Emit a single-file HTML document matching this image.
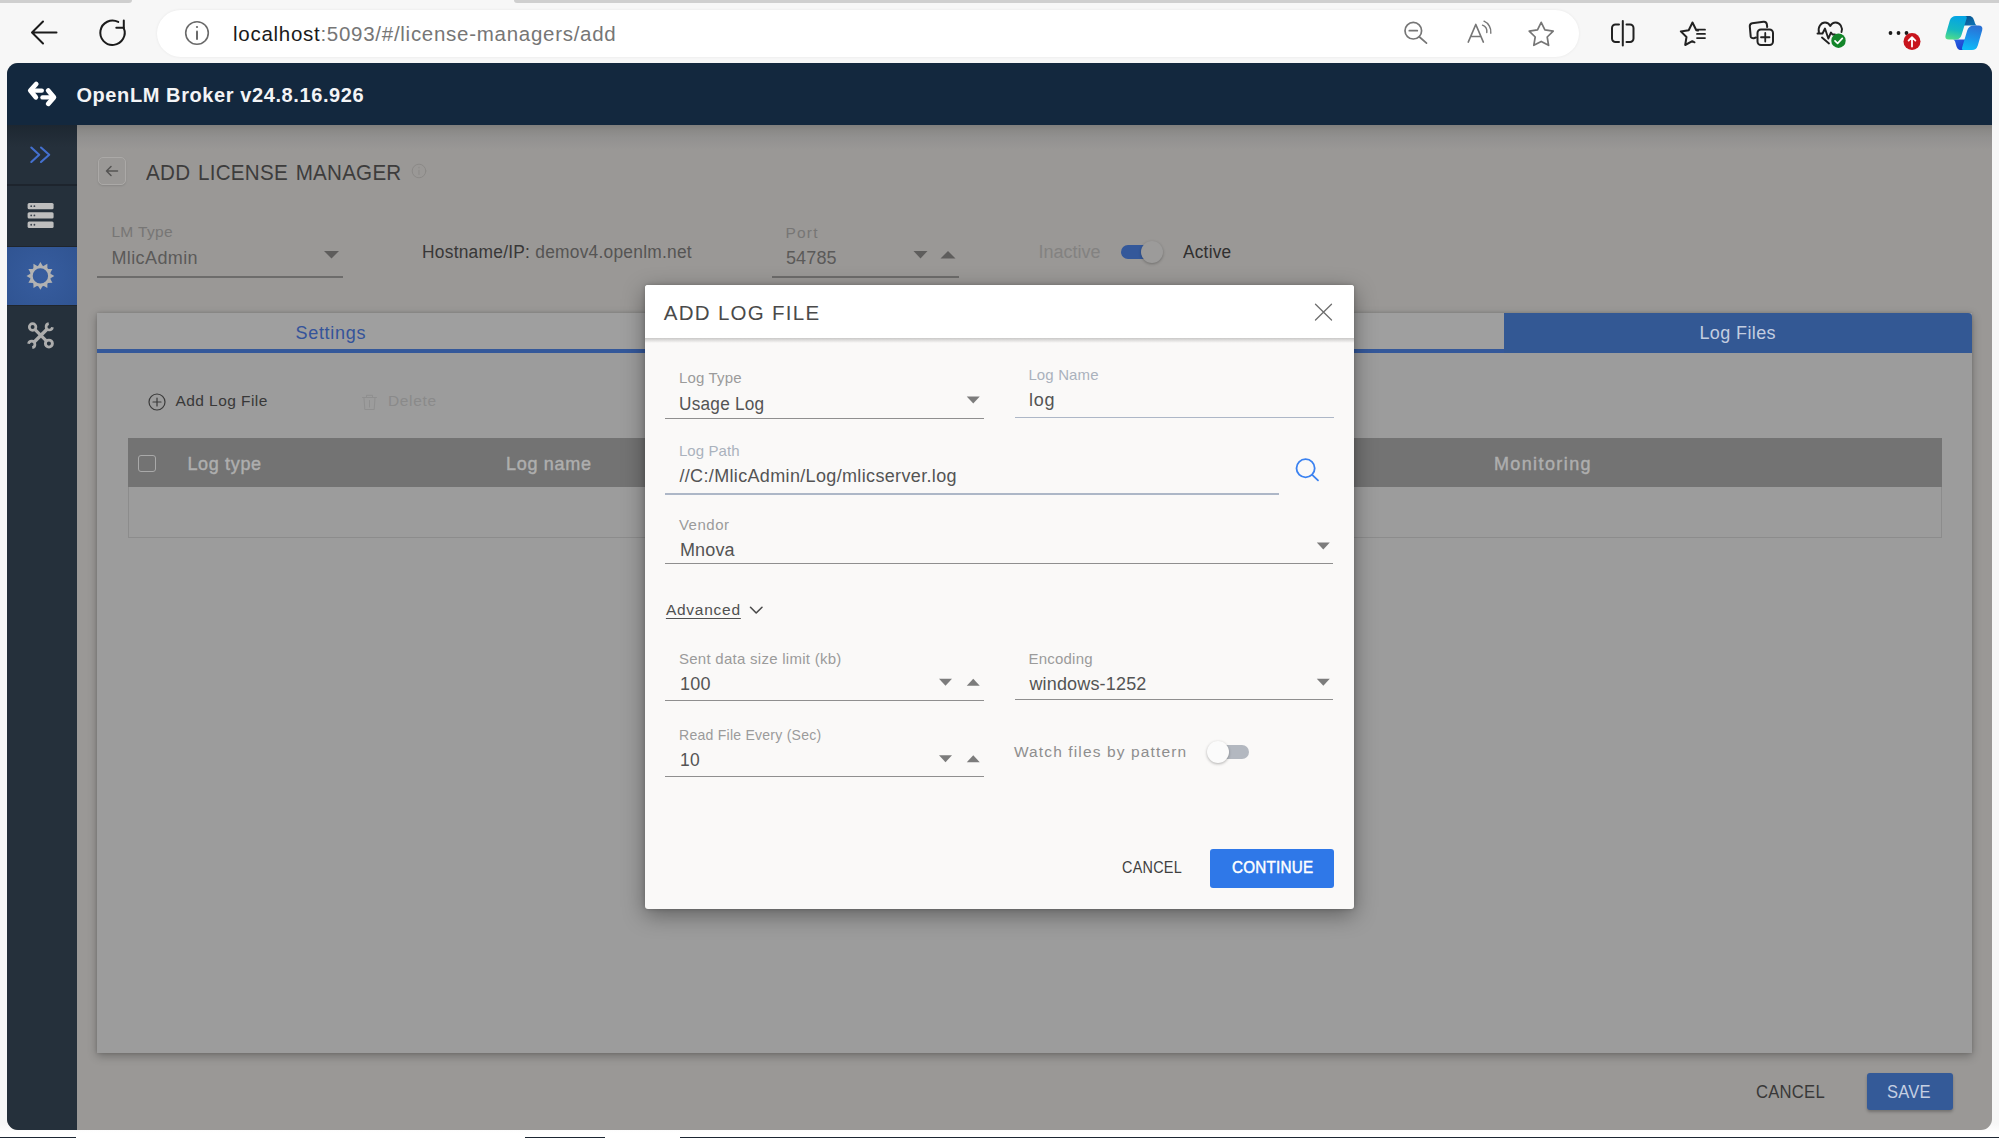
<!DOCTYPE html>
<html lang="en">
<head>
<meta charset="utf-8">
<title>OpenLM Broker - Add License Manager</title>
<style>
*{box-sizing:border-box;margin:0;padding:0}
html,body{width:1999px;height:1139px;overflow:hidden}
body{position:relative;background:#f7f7f7;font-family:"Liberation Sans",sans-serif}
.a{position:absolute;display:block}
.t{position:absolute;display:block;white-space:nowrap;line-height:1;font-family:"Liberation Sans",sans-serif}
svg{position:absolute;overflow:visible}
.ln{position:absolute;height:1px}
</style>
</head>
<body>
<!-- ===== browser chrome ===== -->
<div class="a" style="left:0;top:0;width:132px;height:3px;background:#cfcfcf;border-bottom-right-radius:6px"></div>
<div class="a" style="left:514px;top:0;width:1485px;height:3px;background:#cfcfcf;border-bottom-left-radius:6px"></div>
<div class="a" style="left:157px;top:9.5px;width:1422px;height:47px;border-radius:23.5px;background:#fff;box-shadow:0 0 3px rgba(0,0,0,.07)"></div>
<!-- back -->
<svg style="left:0;top:0" width="1999" height="62" viewBox="0 0 1999 62" fill="none" stroke-linecap="round" stroke-linejoin="round">
  <g stroke="#1b1b1b" stroke-width="2">
    <path d="M56.5 32.5H33M43 21.5L32 32.5L43 43.5"/>
    <path d="M123.650 27.800A12.200 12.200 0 1 1 118.230 21.980"/>
    <path d="M123.800 20.600V27.800H116.300"/>
  </g>
  <g stroke="#6a6a6a" stroke-width="1.6">
    <circle cx="197" cy="33" r="11.3"/>
    <path d="M197 31.5V39" stroke-width="2"/>
    <circle cx="197" cy="27" r="1.1" fill="#6a6a6a" stroke="none"/>
  </g>
  <!-- zoom out -->
  <g stroke="#767676" stroke-width="1.7">
    <circle cx="1413.3" cy="30.7" r="8.3"/>
    <path d="M1419.5 37L1426.5 43.2M1409.3 30.7H1417.3"/>
  </g>
  <!-- read aloud A -->
  <g stroke="#767676" stroke-width="1.7">
    <path d="M1468.3 42L1475.8 24.5L1483.3 42M1470.8 36.5H1480.8"/>
    <path d="M1482.5 25.2A7 7 0 0 1 1486.8 32.5" stroke-width="1.4"/>
    <path d="M1484 21.2A11.5 11.5 0 0 1 1490.8 33.2" stroke-width="1.4"/>
  </g>
  <!-- star -->
  <path stroke="#767676" stroke-width="1.7" d="M1541.2 22.3L1544.9 29.9L1553.2 31.1L1547.2 37L1548.6 45.3L1541.2 41.4L1533.8 45.3L1535.2 37L1529.2 31.1L1537.5 29.9Z"/>
  <!-- split screen -->
  <g stroke="#222" stroke-width="2">
    <path d="M1619 24.5H1615.5A3.5 3.5 0 0 0 1612 28V38.5A3.5 3.5 0 0 0 1615.5 42H1619"/>
    <path d="M1626.5 24.5H1630A3.5 3.5 0 0 1 1633.500 28V38.5A3.500 3.500 0 0 1 1630 42H1626.5"/>
    <path d="M1622.800 21V45.5"/>
  </g>
  <!-- favorites -->
  <g stroke="#222" stroke-width="2">
    <path d="M1698 30.5L1696.300 30.200L1692.500 22.500L1688.700 30.200L1680.800 31.400L1686.500 37L1685.200 45L1692.300 41.200L1694.500 42.300"/>
    <path d="M1697 29.700H1705M1697 33.900H1705M1697 38.100H1705" stroke-width="1.800"/>
  </g>
  <!-- collections -->
  <g stroke="#222" stroke-width="2">
    <path d="M1756 37.500L1753.800 38.200A2.500 2.500 0 0 1 1750.700 36.400L1749.800 26.500A3 3 0 0 1 1752.200 23.300L1763.500 21.700A3 3 0 0 1 1766.800 24L1767.200 27"/>
    <rect x="1757.500" y="29.500" width="15.500" height="15.500" rx="3.500"/>
    <path d="M1765.250 33V41.500M1761 37.250H1769.500" stroke-width="1.800"/>
  </g>
  <!-- heart pulse -->
  <g stroke="#222" stroke-width="1.900">
    <path d="M1819 32.500C1817.500 27 1821 22.500 1825 22.500C1827.500 22.500 1829.300 24 1830.300 26C1831.300 24 1833.200 22.500 1835.700 22.500C1840 22.500 1843 27.500 1841.500 32"/>
    <path d="M1817.500 33.500H1822.500L1825 28.500L1828.300 38.500L1831 32.500L1832.500 34.500H1835"/>
    <path d="M1822 37.500L1829 43.500"/>
  </g>
  <circle cx="1838.500" cy="40.700" r="7.200" fill="#13862a"/>
  <path d="M1835 40.800L1837.600 43.300L1842.300 38.300" stroke="#fff" stroke-width="1.700"/>
  <!-- dots + red badge -->
  <g fill="#1b1b1b"><circle cx="1890.500" cy="33" r="1.900"/><circle cx="1898.500" cy="33" r="1.900"/><circle cx="1906.500" cy="33" r="1.900"/></g>
  <circle cx="1912" cy="41.500" r="8.500" fill="#c8151d"/>
  <path d="M1912 46.500V37.500M1908.600 40.600L1912 37.200L1915.400 40.600" stroke="#fff" stroke-width="1.800"/>
</svg>
<!-- copilot -->
<svg style="left:1945px;top:15px" width="40" height="37" viewBox="0 0 40 37">
  <defs>
    <linearGradient id="cpa" x1="0.3" y1="0" x2="0.1" y2="1"><stop offset="0" stop-color="#05a5e3"/><stop offset=".55" stop-color="#16b9c0"/><stop offset="1" stop-color="#56e084"/></linearGradient>
    <linearGradient id="cpb" x1="0.6" y1="0" x2="0.4" y2="1"><stop offset="0" stop-color="#2b70d4"/><stop offset=".5" stop-color="#1b92ea"/><stop offset="1" stop-color="#0dbcf7"/></linearGradient>
    <linearGradient id="cpc" x1="0" y1="0" x2="1" y2="1"><stop offset="0" stop-color="#0a4f86"/><stop offset="1" stop-color="#0c78bd"/></linearGradient>
    <linearGradient id="cpd" x1="0" y1="0" x2="1" y2="1"><stop offset="0" stop-color="#2b66e6"/><stop offset="1" stop-color="#1638c8"/></linearGradient>
  </defs>
  <path d="M17 0.900H24C27.500 0.900 28.500 3.300 29.300 6L30 8.300C30.600 10 31.500 10.600 33 10.600H18.500Z" fill="url(#cpc)"/>
  <path d="M7.500 24.600C9.300 24.600 10 26 10.500 28L11.200 30.500C12 33 13 35.100 16 35.100H20L22 24.600Z" fill="url(#cpd)"/>
  <path d="M11 0.900H20Q22.400 0.900 21.600 3.600L16.600 19.800Q15.200 24.600 11 24.600H4Q-0.600 24.600 0.600 20L4.800 5.500Q6.300 0.900 11 0.900Z" fill="url(#cpa)"/>
  <path d="M29 10.600H33.500Q38.300 10.600 37.200 15.200L32.800 30.500Q31.300 35.100 27 35.100H19Q16.300 35.100 17.100 32.500L22.300 15.300Q23.800 10.600 29 10.600Z" fill="url(#cpb)"/>
</svg>


<!-- ===== app window ===== -->
<div class="a" style="left:0;top:1124px;width:1999px;height:15px;background:linear-gradient(#f7f7f7,#fff 60%)"></div>
<div class="a" id="app" style="left:7px;top:62.5px;width:1985.3px;height:1067.5px;border-radius:11px;overflow:hidden;background:#9a9896">
  <div class="a" style="left:0;top:0;width:1986px;height:62.5px;background:#13283e"></div>
  <div class="a" style="left:69.5px;top:62.5px;width:1917px;height:25px;background:linear-gradient(#807f7d,#8a8987 20%,#929190 50%,#9a9896)"></div>
  <!-- sidebar -->
  <div class="a" style="left:0;top:62.5px;width:69.5px;height:1005px;background:#25303b"></div>
  <div class="a" style="left:0;top:62.5px;width:69.5px;height:22px;background:linear-gradient(#1d2731,#25303b)"></div>
  <div class="a" style="left:0;top:121.5px;width:69.5px;height:2px;background:#1d242d"></div>
  <div class="a" style="left:0;top:183px;width:69.5px;height:1.500px;background:#1f252c"></div>
  <div class="a" style="left:0;top:184.500px;width:69.500px;height:57.500px;background:radial-gradient(circle at 50% 50%,#375d9f,#305492)"></div>
  <div class="a" style="left:0;top:242px;width:69.500px;height:1.500px;background:#20262d"></div>
</div>
<svg style="left:0;top:62px" width="90" height="300" viewBox="0 62 90 300" fill="none" stroke-linecap="round" stroke-linejoin="round">
  <!-- logo -->
  <g stroke="#fff" stroke-width="4.400" stroke-linecap="round" stroke-linejoin="round">
    <path d="M31.500 90.600H41.800"/>
    <path d="M36.200 84L30.300 90.600L35.800 97.300" stroke-width="4.800"/>
    <path d="M42.500 97.400H52.800"/>
    <path d="M48.200 90.500L53.900 97.300L48.200 103.800" stroke-width="4.800"/>
  </g>
  <!-- chevrons -->
  <g stroke="#4470cf" stroke-width="2.100">
    <path d="M31.300 147.500L39.200 154.700L31.300 162"/>
    <path d="M41 147.500L49.200 154.700L41 162"/>
  </g>
  <!-- stack -->
  <g fill="#bebebe">
    <rect x="27.600" y="203" width="26" height="6.300" rx="1.500"/>
    <rect x="27.600" y="212.300" width="26" height="6.300" rx="1.500"/>
    <rect x="27.600" y="221.600" width="26" height="6.300" rx="1.500"/>
  </g>
  <g fill="#3a424d">
    <circle cx="31.200" cy="206.150" r="0.900"/><circle cx="34.400" cy="206.150" r="0.900"/>
    <circle cx="31.200" cy="215.450" r="0.900"/><circle cx="34.400" cy="215.450" r="0.900"/>
    <circle cx="31.200" cy="224.750" r="0.900"/><circle cx="34.400" cy="224.750" r="0.900"/>
  </g>
  <!-- gear -->
  <g transform="translate(40.400 275.900)">
    <circle r="9.100" stroke="#b2b2b2" stroke-width="2.800"/>
    <g fill="#b2b2b2">
      <path d="M-2.50 -9.70L0.00 -13.90L2.50 -9.70Z"/>
      <path d="M2.68 -9.65L6.95 -12.04L7.02 -7.15Z"/>
      <path d="M7.15 -7.02L12.04 -6.95L9.65 -2.68Z"/>
      <path d="M9.70 -2.50L13.90 -0.00L9.70 2.50Z"/>
      <path d="M9.65 2.68L12.04 6.95L7.15 7.02Z"/>
      <path d="M7.02 7.15L6.95 12.04L2.68 9.65Z"/>
      <path d="M2.50 9.70L0.00 13.90L-2.50 9.70Z"/>
      <path d="M-2.68 9.65L-6.95 12.04L-7.02 7.15Z"/>
      <path d="M-7.15 7.02L-12.04 6.95L-9.65 2.68Z"/>
      <path d="M-9.70 2.50L-13.90 0.00L-9.70 -2.50Z"/>
      <path d="M-9.65 -2.68L-12.04 -6.95L-7.15 -7.02Z"/>
      <path d="M-7.02 -7.15L-6.95 -12.04L-2.68 -9.65Z"/>
    </g>
  </g>
  <!-- tools -->
  <g stroke="#adadad" fill="none" stroke-linecap="butt">
    <path d="M34.200 342L47 329.200" stroke-width="3.400"/>
    <path d="M52.450 327.360A3.200 3.200 0 1 1 48.740 323.650" stroke-width="2.700"/>
    <path d="M28.550 343.840A3.200 3.200 0 1 1 32.260 347.550" stroke-width="2.700"/>
    <path d="M35.300 329.800L46.300 340.900" stroke-width="3.200"/>
    <circle cx="32.600" cy="327" r="3.300" stroke-width="2.700"/>
    <circle cx="48.900" cy="343.600" r="3.500" stroke-width="2.900"/>
  </g>
</svg>


<!-- ===== page (dimmed) ===== -->
<div class="a" style="left:98px;top:157px;width:28px;height:28px;border:1px solid #aba9a7;border-radius:5px;box-shadow:0 1px 2px rgba(0,0,0,.12)"></div>
<div class="ln" style="left:97px;top:276.400px;width:246px;height:1.200px;background:#6d6c6b"></div>
<div class="ln" style="left:772px;top:276.400px;width:187px;height:1.200px;background:#6d6c6b"></div>
<!-- active toggle -->
<div class="a" style="left:1120.5px;top:244.5px;width:40px;height:14px;border-radius:7px;background:#34589a"></div>
<div class="a" style="left:1141px;top:241px;width:22px;height:22px;border-radius:11px;background:#9c9b9a;box-shadow:0 1px 3px rgba(0,0,0,.28)"></div>
<!-- card -->
<div class="a" style="left:97px;top:312.5px;width:1875px;height:740px;background:#9c9c9c;box-shadow:0 3px 9px rgba(0,0,0,.28),0 0 3px rgba(0,0,0,.14)"></div>
<div class="a" style="left:97px;top:312.5px;width:1406.5px;height:37px;background:#9f9f9f"></div>
<div class="a" style="left:97px;top:349px;width:1875px;height:3.5px;background:#34589a"></div>
<div class="a" style="left:1503.5px;top:312.5px;width:468.5px;height:40px;background:#335894;border-top-right-radius:4px"></div>
<!-- table -->
<div class="a" style="left:127.5px;top:437.5px;width:1814px;height:100.5px;border:1px solid #8c8c8c;background:#9c9c9c"></div>
<div class="a" style="left:127.5px;top:437.5px;width:1814px;height:49px;background:#737373"></div>
<div class="a" style="left:138px;top:454.5px;width:18px;height:17px;border:1.5px solid #a9a9a9;border-radius:3px"></div>
<!-- save -->
<div class="a" style="left:1866.5px;top:1073px;width:86px;height:37px;border-radius:3px;background:#345a98;box-shadow:0 2px 3px rgba(0,0,0,.25)"></div>
<svg style="left:0;top:124px" width="1999" height="1015" viewBox="0 124 1999 1015" fill="none" stroke-linecap="round" stroke-linejoin="round">
  <!-- back button arrow -->
  <path d="M117.500 171H106.500M111 166.500L106.500 171L111 175.500" stroke="#555453" stroke-width="1.500"/>
  <!-- info -->
  <g stroke="#8b8987" stroke-width="1">
    <circle cx="419" cy="171" r="6.800"/>
    <path d="M419 170.300V174.500M419 167.300V167.900"/>
  </g>
  <!-- dropdown arrows -->
  <g fill="#5e5d5c">
    <path d="M324 251H339L331.500 258.500Z"/>
    <path d="M913.500 251H927.500L920.500 258.500Z"/>
    <path d="M940.500 258.500H955.500L948 251Z"/>
  </g>
  <!-- add -->
  <g stroke="#3a3a3a" stroke-width="1.200">
    <circle cx="157" cy="402" r="8"/>
    <path d="M157 398V406M153 402H161"/>
  </g>
  <!-- trash -->
  <g stroke="#8f8f8f" stroke-width="1">
    <path d="M362.500 397.500H376.500M366.500 397.300V395.300H372.500V397.300M364 398L364.800 409.500H374.200L375 398"/>
    <path d="M369.500 400.500V407" stroke-width="1"/>
  </g>
</svg>


<!-- ===== modal ===== -->
<div class="a" style="left:644.5px;top:284.5px;width:709.5px;height:624.5px;border-radius:3px;background:#faf9f8;box-shadow:0 6px 22px rgba(0,0,0,.38),0 0 4px rgba(0,0,0,.2)"></div>
<div class="a" style="left:644.5px;top:337.5px;width:709.5px;height:5px;background:linear-gradient(#c9c8c7,#faf9f8)"></div>
<div class="a" style="left:644.5px;top:284.5px;width:709.5px;height:53px;border-radius:3px 3px 0 0;background:#fff"></div>
<div class="ln" style="left:665px;top:418.20px;width:318.5px;height:1.200px;background:#8f8f8f"></div>
<div class="ln" style="left:1015px;top:416.800px;width:318.500px;height:1.700px;background:#adb7c7"></div>
<div class="ln" style="left:665px;top:493.300px;width:614px;height:1.700px;background:#adb7c7"></div>
<div class="ln" style="left:665px;top:563.20px;width:668px;height:1.200px;background:#8f8f8f"></div>
<div class="ln" style="left:665px;top:699.70px;width:318.5px;height:1.200px;background:#8f8f8f"></div>
<div class="ln" style="left:1014.5px;top:699.20px;width:318.5px;height:1.200px;background:#8f8f8f"></div>
<div class="ln" style="left:665px;top:776.20px;width:318.5px;height:1.200px;background:#8f8f8f"></div>
<!-- off toggle -->
<div class="a" style="left:1208px;top:745px;width:41px;height:14px;border-radius:7px;background:#b3b8c0"></div>
<div class="a" style="left:1206.5px;top:741px;width:22px;height:22px;border-radius:11px;background:#fbfbfb;box-shadow:0 1px 3px rgba(0,0,0,.3)"></div>
<!-- continue -->
<div class="a" style="left:1210px;top:849px;width:123.5px;height:39px;border-radius:3px;background:#2f78e8"></div>
<svg style="left:0;top:284px" width="1999" height="640" viewBox="0 284 1999 640" fill="none" stroke-linecap="round" stroke-linejoin="round">
  <!-- close -->
  <path d="M1315.500 304.300L1331.500 320M1331.500 304.300L1315.500 320" stroke="#6e6e6e" stroke-width="1.300"/>
  <!-- arrows -->
  <g fill="#7c7c7c">
    <path d="M966.75 396.40H979.75L973.25 403.40Z"/>
    <path d="M1316.80 542.60H1329.80L1323.30 549.60Z"/>
    <path d="M939.00 678.80H952.00L945.50 685.80Z"/>
    <path d="M966.75 685.80H979.75L973.25 678.80Z"/>
    <path d="M1316.80 678.80H1329.80L1323.30 685.80Z"/>
    <path d="M939.00 755.30H952.00L945.50 762.30Z"/>
    <path d="M966.75 762.30H979.75L973.25 755.30Z"/>
  </g>
  <!-- search -->
  <g stroke="#3b82f0" stroke-width="1.800">
    <circle cx="1305.600" cy="468.300" r="9.100"/>
    <path d="M1312.200 474.800L1318 480.400"/>
  </g>
  <!-- chevron -->
  <path d="M750.500 607.300L756.200 613L762 607.300" stroke="#4a4a4a" stroke-width="1.600"/>
</svg>


<span class="t" style="left:233.00px;top:24px;font-size:20.5px;font-weight:400;color:#767676;letter-spacing:0.724px;"><span style="color:#1a1a1a">localhost</span>:5093/#/license-managers/add</span>
<span class="t" style="left:76.40px;top:85px;font-size:20px;font-weight:700;color:#f3f4f6;letter-spacing:0.594px;">OpenLM Broker v24.8.16.926</span>
<span class="t" style="left:145.80px;top:161px;font-size:23px;font-weight:400;color:#3d3c3c;letter-spacing:0.250px;transform:scale(0.8966,0.9450);transform-origin:1.20px 19px;word-spacing:2px;">ADD LICENSE MANAGER</span>
<span class="t" style="left:111.40px;top:224px;font-size:15.5px;font-weight:400;color:#777675;letter-spacing:0.338px;">LM Type</span>
<span class="t" style="left:111.40px;top:249px;font-size:18px;font-weight:400;color:#5b5a59;letter-spacing:0.398px;">MlicAdmin</span>
<span class="t" style="left:421.90px;top:243px;font-size:18px;font-weight:400;color:#555453;letter-spacing:0.250px;transform:scale(0.9651,1.0000);transform-origin:0.60px 15px;"><span style="color:#383737">Hostname/IP:</span> demov4.openlm.net</span>
<span class="t" style="left:785.40px;top:225px;font-size:15.5px;font-weight:400;color:#777675;letter-spacing:1.254px;">Port</span>
<span class="t" style="left:785.90px;top:249px;font-size:18px;font-weight:400;color:#5b5a59;letter-spacing:0.159px;">54785</span>
<span class="t" style="left:1038.40px;top:243px;font-size:18px;font-weight:400;color:#838281;letter-spacing:0.022px;">Inactive</span>
<span class="t" style="left:1183.40px;top:243px;font-size:18px;font-weight:400;color:#302f2f;letter-spacing:0.250px;transform:scale(0.9576,1.0000);transform-origin:0.60px 15px;">Active</span>
<span class="t" style="left:295.40px;top:324px;font-size:18px;font-weight:400;color:#34539a;letter-spacing:0.736px;">Settings</span>
<span class="t" style="left:1699.40px;top:324px;font-size:18px;font-weight:400;color:#c3cde0;letter-spacing:0.394px;">Log Files</span>
<span class="t" style="left:175.40px;top:393px;font-size:15.5px;font-weight:400;color:#383838;letter-spacing:0.447px;">Add Log File</span>
<span class="t" style="left:387.90px;top:393px;font-size:15.5px;font-weight:400;color:#8a8a8a;letter-spacing:0.678px;">Delete</span>
<span class="t" style="left:187.40px;top:455px;font-size:18px;font-weight:400;color:#aeaeae;letter-spacing:0.663px;-webkit-text-stroke:0.45px currentColor;">Log type</span>
<span class="t" style="left:505.90px;top:455px;font-size:18px;font-weight:400;color:#aeaeae;letter-spacing:0.734px;-webkit-text-stroke:0.45px currentColor;">Log name</span>
<span class="t" style="left:1493.90px;top:455px;font-size:18px;font-weight:400;color:#aeaeae;letter-spacing:1.406px;-webkit-text-stroke:0.45px currentColor;">Monitoring</span>
<span class="t" style="left:1755.90px;top:1083px;font-size:18px;font-weight:400;color:#393838;letter-spacing:0.250px;transform:scale(0.9236,1.0000);transform-origin:0.60px 15px;">CANCEL</span>
<span class="t" style="left:1887.40px;top:1083px;font-size:18px;font-weight:400;color:#c5cfe2;letter-spacing:0.250px;transform:scale(0.9192,1.0000);transform-origin:0.60px 15px;">SAVE</span>
<span class="t" style="left:663.80px;top:303px;font-size:20.5px;font-weight:400;color:#4a4a4a;letter-spacing:1.285px;">ADD LOG FILE</span>
<span class="t" style="left:678.90px;top:370px;font-size:15px;font-weight:400;color:#9b9b9b;letter-spacing:0.178px;">Log Type</span>
<span class="t" style="left:679.40px;top:395px;font-size:18px;font-weight:400;color:#545454;letter-spacing:0.250px;transform:scale(0.9559,1.0000);transform-origin:0.60px 15px;">Usage Log</span>
<span class="t" style="left:1028.40px;top:367px;font-size:15px;font-weight:400;color:#aab2bd;letter-spacing:0.140px;">Log Name</span>
<span class="t" style="left:1028.90px;top:391px;font-size:18px;font-weight:400;color:#545454;letter-spacing:0.834px;">log</span>
<span class="t" style="left:678.90px;top:443px;font-size:15px;font-weight:400;color:#aab2bd;letter-spacing:0.091px;">Log Path</span>
<span class="t" style="left:679.40px;top:467px;font-size:18px;font-weight:400;color:#545454;letter-spacing:0.347px;">//C:/MlicAdmin/Log/mlicserver.log</span>
<span class="t" style="left:678.90px;top:517px;font-size:15px;font-weight:400;color:#9b9b9b;letter-spacing:0.531px;">Vendor</span>
<span class="t" style="left:679.90px;top:541px;font-size:18px;font-weight:400;color:#545454;letter-spacing:0.167px;">Mnova</span>
<span class="t" style="left:665.90px;top:602px;font-size:15.5px;font-weight:400;color:#505050;letter-spacing:0.750px;text-decoration:underline;text-underline-offset:2.5px;text-decoration-thickness:1px;">Advanced</span>
<span class="t" style="left:678.90px;top:651px;font-size:15px;font-weight:400;color:#9b9b9b;letter-spacing:0.273px;">Sent data size limit (kb)</span>
<span class="t" style="left:679.90px;top:675px;font-size:18px;font-weight:400;color:#545454;letter-spacing:0.327px;">100</span>
<span class="t" style="left:1028.40px;top:651px;font-size:15px;font-weight:400;color:#9b9b9b;letter-spacing:0.234px;">Encoding</span>
<span class="t" style="left:1029.40px;top:675px;font-size:18px;font-weight:400;color:#545454;letter-spacing:0.170px;">windows-1252</span>
<span class="t" style="left:678.90px;top:727px;font-size:15px;font-weight:400;color:#9b9b9b;letter-spacing:0.250px;transform:scale(0.9368,1.0000);transform-origin:0.60px 13px;">Read File Every (Sec)</span>
<span class="t" style="left:679.90px;top:751px;font-size:18px;font-weight:400;color:#545454;letter-spacing:0.250px;transform:scale(0.9695,1.0000);transform-origin:0.60px 15px;">10</span>
<span class="t" style="left:1013.90px;top:744px;font-size:15.5px;font-weight:400;color:#8e8e8e;letter-spacing:1.130px;">Watch files by pattern</span>
<span class="t" style="left:1121.90px;top:860px;font-size:16px;font-weight:400;color:#3f3f3f;letter-spacing:0.250px;transform:scale(0.9006,1.0000);transform-origin:0.60px 13px;">CANCEL</span>
<span class="t" style="left:1231.90px;top:860px;font-size:16px;font-weight:400;color:#ffffff;letter-spacing:0.250px;transform:scale(0.9511,1.0000);transform-origin:0.60px 13px;-webkit-text-stroke:0.45px currentColor;">CONTINUE</span>

<!-- bottom strip -->
<div class="a" style="left:0;top:1136.500px;width:76px;height:1.500px;background:#1d2733"></div>
<div class="a" style="left:525px;top:1136.500px;width:80px;height:1.500px;background:#1d2733"></div>
<div class="a" style="left:680px;top:1136.500px;width:1319px;height:1.500px;background:#1d2733"></div>
</body>
</html>
